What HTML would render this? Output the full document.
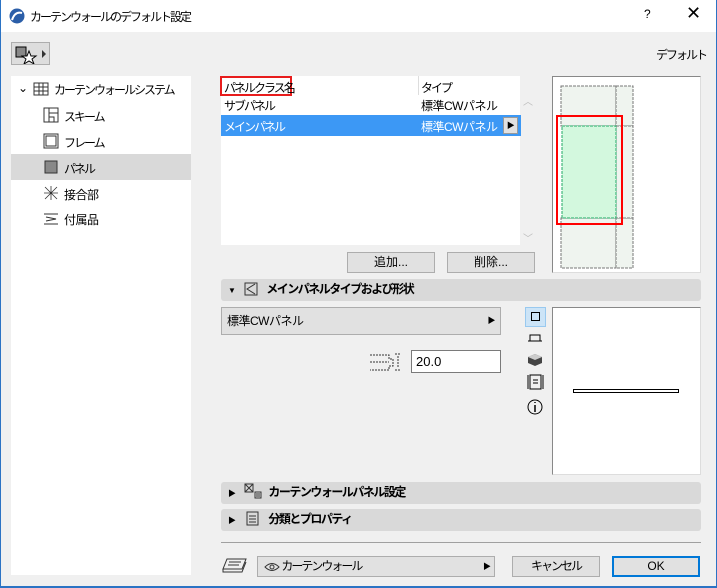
<!DOCTYPE html>
<html><head><meta charset="utf-8"><style>
*{box-sizing:border-box;margin:0;padding:0}
body{width:717px;height:588px;background:#f0f0f0;font-family:"Liberation Sans","Noto Sans CJK JP",sans-serif;font-size:12px;color:#000;position:relative;overflow:hidden;letter-spacing:-0.5px}
.a{position:absolute}
.k{letter-spacing:-2px}
.btn{position:absolute;background:#e1e1e1;border:1px solid #adadad;text-align:center;line-height:18px}
.sec{position:absolute;left:221px;width:480px;background:#d9d9d9;border-radius:3px;font-weight:bold;line-height:21px}
</style></head><body>
<div class="a" style="left:0;top:0;width:717px;height:32px;background:#fff"></div>
<svg class="a" style="left:9px;top:8px" width="16" height="16"><circle cx="8" cy="8" r="7.5" fill="#2b5ea8"/><path d="M3 12 Q6 3 13 5" stroke="#fff" stroke-width="2" fill="none"/></svg>
<div class="a k" style="left:30px;top:8px">カーテンウォールのデフォルト設定</div>
<div class="a" style="left:644px;top:7px">?</div>
<div class="a" style="left:686px;top:3px;font-size:18px">✕</div>
<div class="btn" style="left:11px;top:42px;width:39px;height:23px;background:#ddd"></div>
<svg class="a" style="left:15px;top:46px" width="34" height="18"><rect x="1" y="1" width="10" height="10" fill="#888" stroke="#000"/><path d="M14 5 L16 10 L21 10 L17 13 L19 18 L14 15 L9 18 L11 13 L7 10 L12 10Z" fill="#fff" stroke="#000"/><path d="M27 4 L31 8 L27 12Z" fill="#333"/></svg>
<div class="a k" style="left:656px;top:46px">デフォルト</div>
<div class="a" style="left:11px;top:76px;width:180px;height:499px;background:#fff"></div>
<div class="a" style="left:11px;top:154px;width:180px;height:26px;background:#d9d9d9"></div>
<div class="a" style="left:18px;top:81px">⌄</div>
<svg class="a" style="left:33px;top:81px" width="16" height="16"><path d="M1 2H15V14H1ZM1 6H15M1 10H15M6 2V14M10 2V14" stroke="#333" fill="none"/></svg>
<div class="a k" style="left:54px;top:81px">カーテンウォールシステム</div>
<svg class="a" style="left:43px;top:107px" width="16" height="16"><path d="M1 1H15V15H1ZM6 1V15M6 6H15M6 10H11V15" stroke="#333" fill="none"/></svg>
<div class="a k" style="left:64px;top:108px">スキーム</div>
<svg class="a" style="left:43px;top:133px" width="16" height="16"><path d="M1 1H15V15H1ZM3 3H13V13H3Z" stroke="#333" fill="none"/></svg>
<div class="a k" style="left:64px;top:134px">フレーム</div>
<svg class="a" style="left:43px;top:159px" width="16" height="16"><rect x="2" y="2" width="12" height="12" fill="#888" stroke="#333"/></svg>
<div class="a k" style="left:64px;top:160px">パネル</div>
<svg class="a" style="left:43px;top:185px" width="16" height="16"><path d="M2 2L14 14M14 2L2 14M8 1V15M1 8H15" stroke="#333" fill="none" stroke-width=".8"/></svg>
<div class="a" style="left:64px;top:186px">接合部</div>
<svg class="a" style="left:43px;top:211px" width="16" height="16"><path d="M1 3H15M1 13H15M3 6L13 8L3 10" stroke="#333" fill="none"/></svg>
<div class="a" style="left:64px;top:211px">付属品</div>
<div class="a" style="left:221px;top:76px;width:300px;height:169px;background:#fff"></div>
<div class="a" style="left:520px;top:76px;width:16px;height:169px;background:#f0f0f0"></div>
<div class="a" style="left:418px;top:76px;width:1px;height:19px;background:#ddd"></div>
<div class="a" style="left:220px;top:76px;width:72px;height:20px;border:2px solid #e81c1c"></div>
<div class="a k" style="left:224px;top:79px">パネルクラス名</div>
<div class="a k" style="left:421px;top:79px">タイプ</div>
<div class="a k" style="left:224px;top:97px">サブパネル</div>
<div class="a" style="left:421px;top:97px">標準CWパネル</div>
<div class="a" style="left:221px;top:115px;width:300px;height:21px;background:#3c98f5"></div>
<div class="a k" style="left:224px;top:118px;color:#fff">メインパネル</div>
<div class="a" style="left:421px;top:118px;color:#fff">標準CWパネル</div>
<div class="a" style="left:503px;top:117px;width:15px;height:17px;background:#e1e1e1;border:1px solid #999;font-size:8px;text-align:center;line-height:15px">▶</div>
<div class="a" style="left:523px;top:93px;color:#bbb;font-size:10px">︿</div>
<div class="a" style="left:523px;top:230px;color:#bbb;font-size:10px">﹀</div>
<div class="btn" style="left:347px;top:252px;width:88px;height:21px;letter-spacing:0">追加...</div>
<div class="btn" style="left:447px;top:252px;width:88px;height:21px;letter-spacing:0">削除...</div>
<div class="a" style="left:552px;top:76px;width:149px;height:197px;background:#fff;border:1px solid #888;border-right-color:#ddd;border-bottom-color:#ddd"></div>
<svg class="a" style="left:552px;top:76px" width="149" height="197"><g stroke="#777" fill="#eff4ef" stroke-dasharray="3,1"><rect x="9" y="10" width="55" height="40"/><rect x="64" y="10" width="17" height="40"/><rect x="9" y="142" width="55" height="50"/><rect x="64" y="142" width="17" height="50"/><rect x="64" y="50" width="17" height="92"/></g><rect x="10" y="50" width="54" height="92" fill="#d3f8de" stroke="#2a6" stroke-dasharray="3,1"/><rect x="5" y="40" width="65" height="108" fill="none" stroke="#f00" stroke-width="2"/></svg>
<div class="sec" style="top:279px"><span style="margin-left:7px;font-size:8px">▼</span>
<svg style="vertical-align:-3px;margin-left:6px" width="14" height="14"><path d="M1 1H13V13H1ZM11 2L3 7L11 12" stroke="#333" fill="none"/></svg><span class="k" style="margin-left:8px;letter-spacing:-1.5px">メインパネルタイプおよび形状</span></div>
<div class="a" style="left:221px;top:307px;width:280px;height:28px;background:#e1e1e1;border:1px solid #adadad;line-height:26px;padding-left:5px">標準CWパネル<span style="position:absolute;right:5px;font-size:8px">▶</span></div>
<svg class="a" style="left:369px;top:351px" width="34" height="22"><path d="M1 4H20V8H24V15H20V19H1M1 11H20M26 3H32M26 19H32M29 5V17" stroke="#333" fill="none" stroke-dasharray="2,1"/></svg>
<div class="a" style="left:411px;top:350px;width:90px;height:23px;background:#fff;border:1px solid #7a7a7a;line-height:21px;padding-left:4px;font-size:13px;letter-spacing:0">20.0</div>
<div class="a" style="left:525px;top:307px;width:21px;height:20px;background:#cce4f7;border:1px solid #99c9ef"></div>
<div class="a" style="left:531px;top:312px;width:9px;height:9px;border:1px solid #000"></div>
<svg class="a" style="left:527px;top:333px" width="18" height="90"><path d="M3 8V2H13V8M1 8H15" stroke="#000" fill="none"/><path d="M8 21L15 24V30L8 33L1 30V24Z" fill="#444"/><path d="M8 21L15 24L8 27L1 24Z" fill="#ccc"/><path d="M3 42H14V56H3ZM1 42V56M16 42V56M6 47H11M6 50H11" stroke="#000" fill="none"/><circle cx="8" cy="74" r="7" stroke="#000" fill="none"/><path d="M8 72V79M8 69V70" stroke="#000" stroke-width="1.5"/></svg>
<div class="a" style="left:552px;top:307px;width:149px;height:168px;background:#fff;border:1px solid #888;border-right-color:#ddd;border-bottom-color:#ddd"></div>
<div class="a" style="left:573px;top:389px;width:106px;height:4px;border:1px solid #000"></div>
<div class="sec" style="top:482px"><span style="margin-left:7px;font-size:8px">▶</span>
<svg style="vertical-align:-3px;margin-left:6px" width="18" height="16"><path d="M1 1H9V9H1ZM1 1L9 9M9 1L1 9M11 9H17V15H11ZM12 11H16M12 13H16" stroke="#333" fill="none"/></svg><span class="k" style="margin-left:6px;letter-spacing:-1.5px">カーテンウォールパネル設定</span></div>
<div class="sec" style="top:509px"><span style="margin-left:7px;font-size:8px">▶</span>
<svg style="vertical-align:-3px;margin-left:8px" width="14" height="15"><path d="M1 1H12V14H1ZM3 5H10M3 8H10M3 11H10" stroke="#333" fill="none"/></svg><span class="k" style="margin-left:8px;letter-spacing:-1.5px">分類とプロパティ</span></div>
<div class="a" style="left:221px;top:542px;width:480px;height:1px;background:#a0a0a0"></div>
<svg class="a" style="left:222px;top:557px" width="26" height="18"><path d="M5 2H24L20 12H1ZM1 12V15H20L24 5M7 5H19M6 8H17" stroke="#333" fill="none"/></svg>
<div class="a k" style="left:257px;top:556px;width:238px;height:21px;background:#e1e1e1;border:1px solid #adadad;line-height:19px;padding-left:6px"><svg style="vertical-align:-2px" width="16" height="10"><path d="M1 5Q8 -2 15 5Q8 12 1 5Z" stroke="#333" fill="none"/><circle cx="8" cy="5" r="2" fill="none" stroke="#333"/></svg> カーテンウォール<span style="position:absolute;right:5px;font-size:8px">▶</span></div>
<div class="btn k" style="left:512px;top:556px;width:88px;height:21px">キャンセル</div>
<div class="btn" style="left:612px;top:556px;width:88px;height:21px;border:2px solid #0078d7;line-height:17px;letter-spacing:0">OK</div>
<div class="a" style="left:0;top:586px;width:717px;height:2px;background:#2b73c4"></div>
<div class="a" style="left:0;top:0;width:1px;height:588px;background:#2b73c4"></div>
<div class="a" style="left:716px;top:0;width:1px;height:588px;background:#2b73c4"></div>
</body></html>
